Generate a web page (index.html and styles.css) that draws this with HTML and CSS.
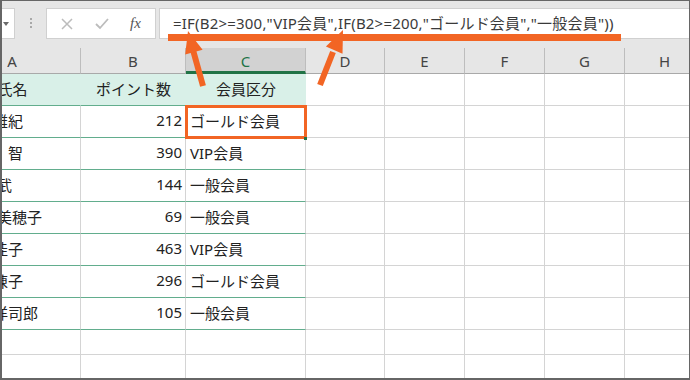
FILE: index.html
```html
<!DOCTYPE html>
<html lang="ja">
<head>
  <meta charset="UTF-8">
  <title>IF関数のネスト</title>
  <link rel="stylesheet" href="styles.css">
</head>
<body>

  <div class="window">
    <div class="toolbar">
      <div class="name-box"><span class="caret"></span></div>
      <div class="grip"></div>
      <div class="fx-box">
        <svg class="btn-icon" width="12" height="12" viewBox="0 0 12 12">
          <path d="M1 1 L11 11 M11 1 L1 11" stroke="#bcbcbc" stroke-width="1.5" fill="none"/>
        </svg>
        <svg class="btn-icon" width="14" height="12" viewBox="0 0 14 12">
          <path d="M1 6 L5 10 L13 1" stroke="#bcbcbc" stroke-width="1.8" fill="none"/>
        </svg>
        <span class="fx">fx</span>
      </div>
      <div class="formula">=IF(B2&gt;=300,"VIP会員",IF(B2&gt;=200,"ゴールド会員","一般会員"))</div>
    </div>

    <div class="sheet">
      <div class="ch">A</div>
      <div class="ch">B</div>
      <div class="ch active">C</div>
      <div class="ch">D</div>
      <div class="ch">E</div>
      <div class="ch">F</div>
      <div class="ch">G</div>
      <div class="ch">H</div>

      <div class="cell title">氏名</div>
      <div class="cell title">ポイント数</div>
      <div class="cell title">会員区分</div>
      <div class="cell"></div><div class="cell"></div><div class="cell"></div><div class="cell"></div><div class="cell"></div>

      <div class="cell tbl">小林　雅紀</div>
      <div class="cell tbl num">212</div>
      <div class="cell tbl selected">ゴールド会員</div>
      <div class="cell"></div><div class="cell"></div><div class="cell"></div><div class="cell"></div><div class="cell"></div>

      <div class="cell tbl">長谷川　智</div>
      <div class="cell tbl num">390</div>
      <div class="cell tbl">VIP会員</div>
      <div class="cell"></div><div class="cell"></div><div class="cell"></div><div class="cell"></div><div class="cell"></div>

      <div class="cell tbl">佐々木 武</div>
      <div class="cell tbl num">144</div>
      <div class="cell tbl">一般会員</div>
      <div class="cell"></div><div class="cell"></div><div class="cell"></div><div class="cell"></div><div class="cell"></div>

      <div class="cell tbl">長谷川 美穂子</div>
      <div class="cell tbl num">69</div>
      <div class="cell tbl">一般会員</div>
      <div class="cell"></div><div class="cell"></div><div class="cell"></div><div class="cell"></div><div class="cell"></div>

      <div class="cell tbl">中村　佳子</div>
      <div class="cell tbl num">463</div>
      <div class="cell tbl">VIP会員</div>
      <div class="cell"></div><div class="cell"></div><div class="cell"></div><div class="cell"></div><div class="cell"></div>

      <div class="cell tbl">山本　陳子</div>
      <div class="cell tbl num">296</div>
      <div class="cell tbl">ゴールド会員</div>
      <div class="cell"></div><div class="cell"></div><div class="cell"></div><div class="cell"></div><div class="cell"></div>

      <div class="cell tbl">前田　洋司郎</div>
      <div class="cell tbl num">105</div>
      <div class="cell tbl">一般会員</div>
      <div class="cell"></div><div class="cell"></div><div class="cell"></div><div class="cell"></div><div class="cell"></div>

      <div class="cell"></div><div class="cell"></div><div class="cell"></div><div class="cell"></div>
      <div class="cell"></div><div class="cell"></div><div class="cell"></div><div class="cell"></div>

      <div class="cell"></div><div class="cell"></div><div class="cell"></div><div class="cell"></div>
      <div class="cell"></div><div class="cell"></div><div class="cell"></div><div class="cell"></div>
    </div>

    <!-- orange callouts over the formula -->
    <svg class="marks" width="690" height="380" viewBox="0 0 690 380">
      <rect x="168" y="34" width="453" height="7" fill="#f26524"/>
      <line x1="203" y1="86" x2="193" y2="50" stroke="#f26524" stroke-width="6"/>
      <polygon points="188,31 202.6,49.8 185.2,54.6" fill="#f26524"/>
      <line x1="320" y1="85" x2="333" y2="52" stroke="#f26524" stroke-width="6"/>
      <polygon points="343,30 342.5,53.8 325.9,46.6" fill="#f26524"/>
    </svg>
  </div>

</body>
</html>
```

FILE: styles.css
```css
body {
  margin: 0;
  font-family: "Noto Sans", "Noto Sans CJK JP", sans-serif;
  background: #fff;
}
.window {
  position: relative;
  width: 690px;
  height: 380px;
  box-sizing: border-box;
  border: 1px solid #666;
  border-left-width: 2px;
  border-bottom-width: 2px;
  background: #e6e6e6;
  overflow: hidden;
}
.toolbar {
  display: flex;
  align-items: flex-start;
  height: 47px;
  box-sizing: border-box;
  padding-top: 7px;
}
.name-box {
  width: 13px;
  height: 31px;
  box-sizing: border-box;
  background: #fff;
  border: 1px solid #d0d0d0;
  border-left: none;
  position: relative;
}
.caret {
  position: absolute;
  left: 1px;
  top: 13px;
  border-left: 3px solid transparent;
  border-right: 3px solid transparent;
  border-top: 4px solid #6a6a6a;
}
.grip {
  width: 2px;
  height: 10px;
  margin: 10px 14px 0 15px;
  background: repeating-linear-gradient(#a8a8a8 0 2px, transparent 2px 4px);
}
.fx-box {
  display: flex;
  align-items: center;
  width: 110px;
  height: 31px;
  box-sizing: border-box;
  padding-left: 14px;
  gap: 22px;
  background: #fff;
  border: 1px solid #d0d0d0;
}
.fx {
  font-family: "Liberation Serif", serif;
  font-style: italic;
  font-size: 15px;
  color: #555;
  margin-left: -1px;
}
.formula {
  flex: 1;
  height: 31px;
  margin-left: 3px;
  box-sizing: border-box;
  padding-left: 13px;
  background: #fff;
  border: 1px solid #d0d0d0;
  border-right: none;
  font-size: 15px;
  line-height: 29px;
  letter-spacing: 0.2px;
  color: #3a3a3a;
  white-space: nowrap;
}
.sheet {
  display: grid;
  grid-template-columns: 137px 105px 120px 79px 80px 80px 80px 80px;
  grid-template-rows: 26px repeat(8, 32px) 25px 25px;
  margin-left: -58px;
  width: max-content;
  background: #fff;
  font-size: 15px;
  color: #222;
}
.ch {
  display: flex;
  align-items: center;
  justify-content: center;
  box-sizing: border-box;
  background: #e6e6e6;
  border-right: 1px solid #bdbdbd;
  border-bottom: 1px solid #a9a9a9;
  color: #444;
}
.ch.active {
  background: #d2d2d2;
  color: #217346;
  border-bottom: 3px solid #217346;
  padding-top: 2px;
}
.cell {
  display: flex;
  align-items: center;
  box-sizing: border-box;
  padding: 0 3px 3px 4px;
  border-right: 1px solid #d4d4d4;
  border-bottom: 1px solid #d4d4d4;
  white-space: nowrap;
  overflow: hidden;
}
.title {
  justify-content: center;
  background: #d9f0e8;
  border-right-color: #d9f0e8;
  border-bottom-color: #62ad8d;
}
.tbl {
  border-bottom-color: #62ad8d;
}
.num {
  justify-content: flex-end;
}
.selected {
  position: relative;
  overflow: visible;
  outline: 3px solid #f26524;
  outline-offset: -2px;
}
.selected::after {
  content: "";
  position: absolute;
  right: -2px;
  bottom: -3px;
  width: 3px;
  height: 3px;
  background: #217346;
}
.marks {
  position: absolute;
  top: -1px;
  left: -2px;
}
```
